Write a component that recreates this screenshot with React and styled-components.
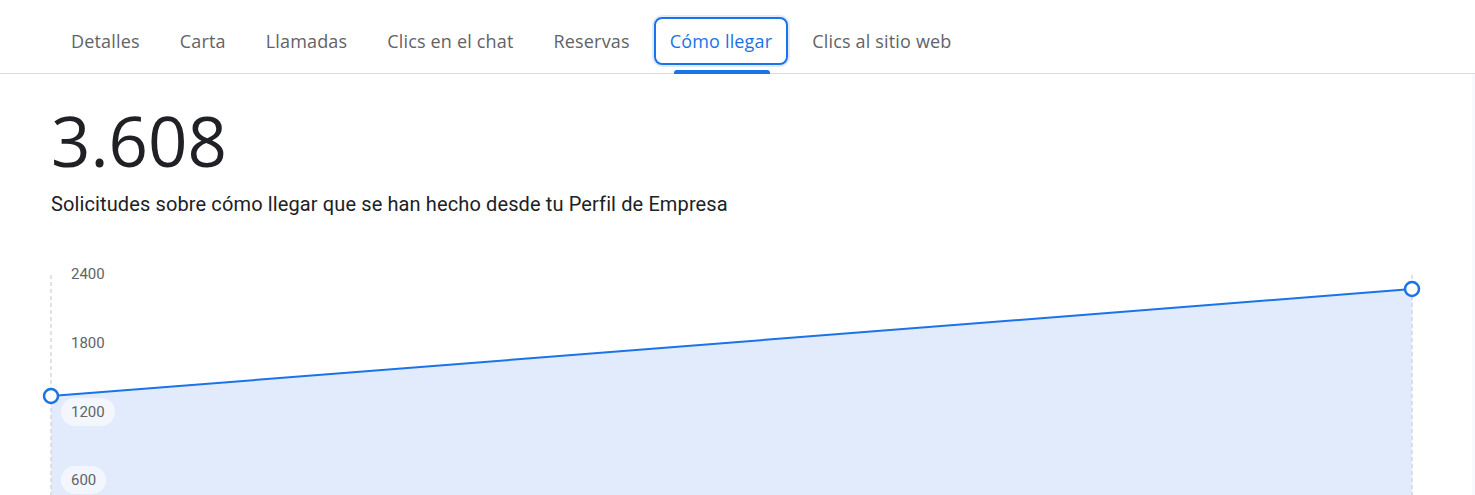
import React from "react";
import styled, { createGlobalStyle } from "styled-components";

const GlobalStyle = createGlobalStyle`
  html, body {
    margin: 0;
    padding: 0;
    background: #fff;
    overflow: hidden;
  }
  body {
    font-family: Roboto, "Noto Sans", sans-serif;
  }
`;

const tabs = [
  "Detalles",
  "Carta",
  "Llamadas",
  "Clics en el chat",
  "Reservas",
  "Cómo llegar",
  "Clics al sitio web",
];
const ACTIVE = "Cómo llegar";

// chart geometry (px inside the chart box)
const CHART_W = 1361;
const CHART_H = 260;
const ZERO_Y = 289;
const PX_PER_UNIT = 68.7 / 600;
const yFor = v => ZERO_Y - v * PX_PER_UNIT;
const points = [
  { x: 0, y: 136 },
  { x: CHART_W, y: 29 },
];
const ticks = [2400, 1800, 1200, 600];

const Header = styled.nav`
  display: flex;
  gap: 8px;
  height: 73px;
  padding-left: 55px;
  border-bottom: 1px solid #dadce0;
`;

const TabItem = styled.div`
  position: relative;
  display: flex;
  padding-top: 17px;

  &::after {
    content: "";
    display: ${p => (p.$active ? "block" : "none")};
    position: absolute;
    left: 20px;
    right: 18px;
    bottom: -1px;
    height: 4px;
    border-radius: 3px 3px 0 0;
    background: #1a73e8;
  }
`;

const TabButton = styled.button`
  height: 48px;
  padding: 0 14px;
  border: 2px solid ${p => (p.$active ? "#1a73e8" : "transparent")};
  border-radius: 8px;
  background: none;
  box-shadow: ${p => (p.$active ? "0 0 0 2px rgba(26, 115, 232, 0.14)" : "none")};
  font-family: "Open Sans", sans-serif;
  font-size: 18px;
  letter-spacing: 0.17px;
  color: ${p => (p.$active ? "#1a73e8" : "#5f6368")};
  cursor: pointer;
`;

const Main = styled.main`
  padding: 26px 60px 0 51px;
  border-right: 3px solid #f8f9fe;
  min-height: 600px;
`;

const Total = styled.div`
  font-family: "Open Sans", sans-serif;
  font-size: 69px;
  line-height: 80px;
  color: #202124;
`;

const Caption = styled.p`
  margin: 12px 0 0;
  font-family: Roboto, sans-serif;
  font-size: 20px;
  letter-spacing: 0.12px;
  line-height: 24px;
  color: #202124;
`;

const Chart = styled.div`
  position: relative;
  margin-top: 44px;
  width: ${CHART_W}px;
  height: ${CHART_H}px;
`;

const Plot = styled.svg`
  display: block;
  overflow: visible;
`;

const TickLabel = styled.span`
  position: absolute;
  left: 10px;
  height: 28px;
  padding: 0 10px;
  border-radius: 14px;
  background: rgba(255, 255, 255, 0.6);
  font-family: Roboto, sans-serif;
  font-size: 15px;
  line-height: 28px;
  color: #5f6368;
`;

export default function App() {
  const [a, b] = points;
  return (
    <>
      <GlobalStyle />
      <Header>
        {tabs.map(t => (
          <TabItem key={t} $active={t === ACTIVE}>
            <TabButton $active={t === ACTIVE}>{t}</TabButton>
          </TabItem>
        ))}
      </Header>
      <Main>
        <Total>3.608</Total>
        <Caption>
          Solicitudes sobre cómo llegar que se han hecho desde tu Perfil de Empresa
        </Caption>
        <Chart>
          <Plot width={CHART_W} height={CHART_H}>
            <polygon
              points={`${a.x},${a.y} ${b.x},${b.y} ${b.x},${CHART_H} ${a.x},${CHART_H}`}
              fill="#e2ebfb"
            />
            <line x1="0" y1="15" x2="0" y2={CHART_H} stroke="#d5d7db" strokeWidth="1.5" strokeDasharray="4 3" />
            <line x1={CHART_W} y1="15" x2={CHART_W} y2={CHART_H} stroke="#d5d7db" strokeWidth="1.5" strokeDasharray="4 3" />
            <line x1={a.x} y1={a.y} x2={b.x} y2={b.y} stroke="#1a73e8" strokeWidth="2" />
            {points.map((p, i) => (
              <circle key={i} cx={p.x} cy={p.y} r="7" fill="#fff" stroke="#1a73e8" strokeWidth="2.5" />
            ))}
          </Plot>
          {ticks.map(v => (
            <TickLabel key={v} style={{ top: yFor(v) - 14 }}>
              {v}
            </TickLabel>
          ))}
        </Chart>
      </Main>
    </>
  );
}
